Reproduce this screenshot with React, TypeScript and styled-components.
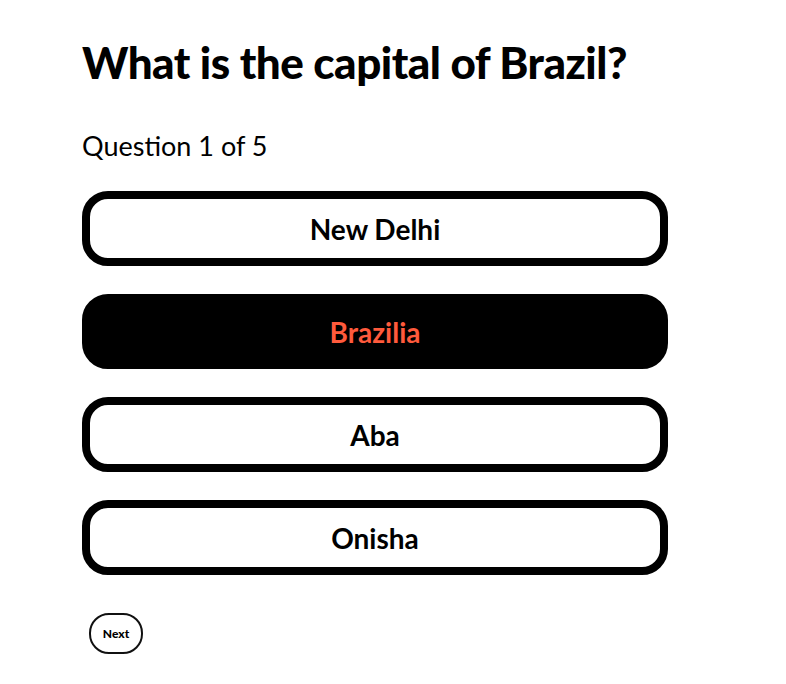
import React, { useState } from "react";
import styled, { createGlobalStyle } from "styled-components";

const GlobalStyle = createGlobalStyle`
  html, body {
    margin: 0;
    padding: 0;
    background: #ffffff;
  }
  body {
    font-family: "Lato", "Noto Sans", sans-serif;
    color: #000;
  }
`;

const Page = styled.main`
  padding: 34px 0 0 82px;
  width: 586px;
  display: flex;
  flex-direction: column;
`;

const Title = styled.h1`
  margin: 0;
  font-size: 44px;
  font-weight: 900;
  line-height: 56px;
  letter-spacing: -0.5px;
`;

const Counter = styled.p`
  margin: 41px 0 0;
  font-size: 27px;
  font-weight: 400;
  line-height: 30px;
`;

const Options = styled.div`
  margin-top: 30px;
  display: flex;
  flex-direction: column;
  gap: 28px;
`;

const Option = styled.button<{ $selected: boolean }>`
  height: 75px;
  box-sizing: border-box;
  border: 8px solid #000;
  border-radius: 26px;
  background: ${(p) => (p.$selected ? "#000" : "#fff")};
  color: ${(p) => (p.$selected ? "#ff5a3c" : "#000")};
  font-family: "Lato", "Noto Sans", sans-serif;
  font-size: 28px;
  font-weight: 700;
  cursor: pointer;
  display: flex;
  align-items: center;
  justify-content: center;
  padding: 0;
`;

const NextButton = styled.button`
  margin: 38px 0 0 7px;
  align-self: flex-start;
  width: 54px;
  height: 41px;
  box-sizing: border-box;
  border: 2px solid #111;
  border-radius: 20px;
  background: #fff;
  color: #000;
  font-family: "Lato", "Noto Sans", sans-serif;
  font-size: 12px;
  font-weight: 900;
  padding: 0;
  cursor: pointer;
`;

const options = ["New Delhi", "Brazilia", "Aba", "Onisha"];

export default function App() {
  const [selected, setSelected] = useState(1);
  return (
    <>
      <GlobalStyle />
      <Page>
        <Title>What is the capital of Brazil?</Title>
        <Counter>Question 1 of 5</Counter>
        <Options>
          {options.map((o, i) => (
            <Option key={o} $selected={selected === i} onClick={() => setSelected(i)}>
              {o}
            </Option>
          ))}
        </Options>
        <NextButton>Next</NextButton>
      </Page>
    </>
  );
}
